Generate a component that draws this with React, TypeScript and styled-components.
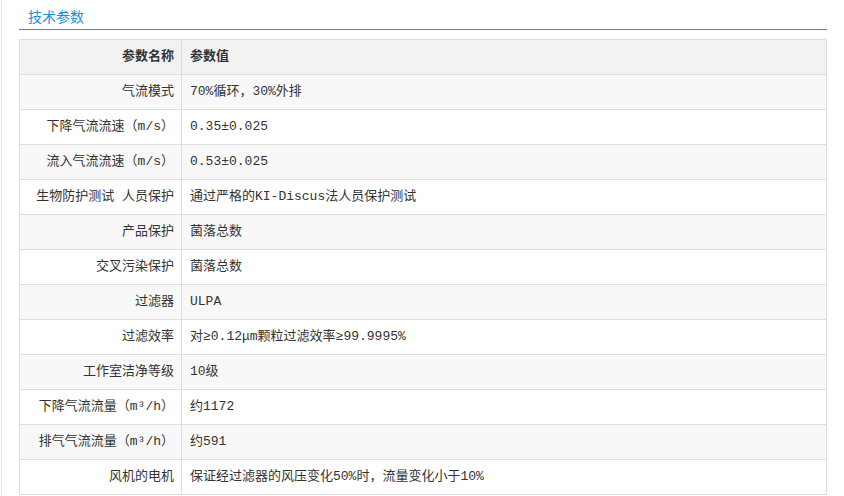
import React from "react";
import styled, { createGlobalStyle } from "styled-components";

const Global = createGlobalStyle`
  html, body { margin: 0; padding: 0; background: #fff; }
  body { font-family: "Liberation Mono", "Noto Sans CJK SC", monospace; }
`;

const Page = styled.div`
  margin-left: 1px;
  border-left: 1px solid #e2e2e2;
  min-height: 496px;
  box-sizing: border-box;
  padding: 0 16px 0 17px;
`;

const Section = styled.section`
  width: 808px;
`;

const TitleBar = styled.div`
  height: 29px;
  border-bottom: 1px solid #2a95d3;
  box-sizing: content-box;
  padding-left: 9px;
  display: flex;
  align-items: flex-end;
`;

const Title = styled.h3`
  margin: 0 0 4px;
  font-family: "Noto Sans CJK SC", "Liberation Sans", sans-serif;
  font-weight: 400;
  font-size: 14px;
  line-height: 18px;
  color: #1b8fd4;
`;

const Table = styled.table`
  margin-top: 9px;
  width: 808px;
  border-collapse: collapse;
  table-layout: fixed;
  font-size: 13px;
  color: #333;
`;

const Row = styled.tr<{ $alt?: boolean; $head?: boolean }>`
  height: 35px;
  background: ${(p) => (p.$head ? "#f2f2f2" : p.$alt ? "#f8f8f8" : "#ffffff")};
`;

const Cell = styled.td<{ $key?: boolean; $head?: boolean }>`
  border: 1px solid #dedede;
  padding: 0 ${(p) => (p.$key ? "7px" : "8px")};
  text-align: ${(p) => (p.$key ? "right" : "left")};
  font-weight: ${(p) => (p.$head ? 700 : 400)};
  width: ${(p) => (p.$key ? "147px" : "auto")};
  white-space: nowrap;
  line-height: 18px;
  vertical-align: middle;
`;

const rows: [string, string][] = [
  ["气流模式", "70%循环，30%外排"],
  ["下降气流流速（m/s）", "0.35±0.025"],
  ["流入气流流速（m/s）", "0.53±0.025"],
  ["生物防护测试 人员保护", "通过严格的KI-Discus法人员保护测试"],
  ["产品保护", "菌落总数"],
  ["交叉污染保护", "菌落总数"],
  ["过滤器", "ULPA"],
  ["过滤效率", "对≥0.12μm颗粒过滤效率≥99.9995%"],
  ["工作室洁净等级", "10级"],
  ["下降气流流量（m³/h）", "约1172"],
  ["排气气流流量（m³/h）", "约591"],
  ["风机的电机", "保证经过滤器的风压变化50%时，流量变化小于10%"],
];

export default function App() {
  return (
    <>
      <Global />
      <Page>
        <Section>
          <TitleBar>
            <Title>技术参数</Title>
          </TitleBar>
          <Table>
            <tbody>
              <Row $head>
                <Cell $key $head>参数名称</Cell>
                <Cell $head>参数值</Cell>
              </Row>
              {rows.map(([k, v], i) => (
                <Row key={k} $alt={i % 2 === 0}>
                  <Cell $key>{k}</Cell>
                  <Cell>{v}</Cell>
                </Row>
              ))}
            </tbody>
          </Table>
        </Section>
      </Page>
    </>
  );
}
